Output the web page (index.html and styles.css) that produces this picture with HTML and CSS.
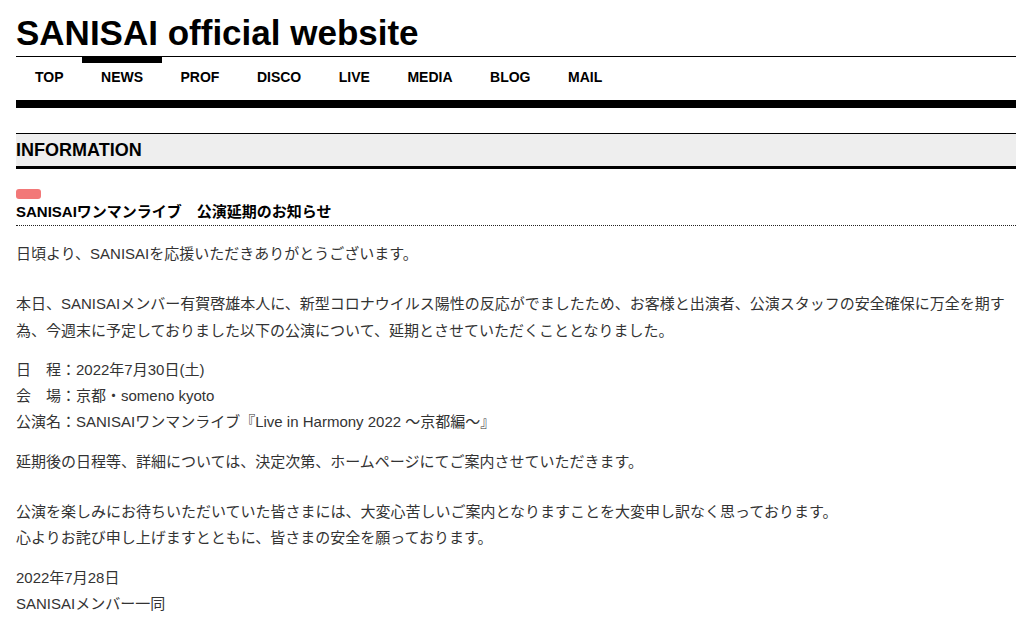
FILE: index.html
```html
<!DOCTYPE html>
<html lang="ja">
<head>
    <meta charset="UTF-8">
    <meta name="viewport" content="width=device-width, initial-scale=1.0">
    <title>SANISAI official website</title>
    <link rel="stylesheet" href="styles.css">
</head>
<body>
    <div class="wrap">
        <h1 class="site-title">SANISAI official website</h1>
        <nav class="gnav">
            <ul>
                <li><a href="#">TOP</a></li>
                <li class="active"><a href="#">NEWS</a></li>
                <li><a href="#">PROF</a></li>
                <li><a href="#">DISCO</a></li>
                <li><a href="#">LIVE</a></li>
                <li><a href="#">MEDIA</a></li>
                <li><a href="#">BLOG</a></li>
                <li><a href="#">MAIL</a></li>
            </ul>
        </nav>

        <h2 class="sec-title">INFORMATION</h2>

        <div class="entry">
            <span class="cat"></span>
            <h3 class="entry-title">SANISAIワンマンライブ　公演延期のお知らせ</h3>
            <div class="entry-body">
                <p class="gap">日頃より、SANISAIを応援いただきありがとうございます。</p>
                <p>本日、SANISAIメンバー有賀啓雄本人に、新型コロナウイルス陽性の反応がでましたため、お客様と出演者、公演スタッフの安全確保に万全を期す為、今週末に予定しておりました以下の公演について、延期とさせていただくこととなりました。</p>
                <p>日　程：2022年7月30日(土)<br>
                会　場：京都・someno kyoto<br>
                公演名：SANISAIワンマンライブ『Live in Harmony 2022 ～京都編～』</p>
                <p class="gap">延期後の日程等、詳細については、決定次第、ホームページにてご案内させていただきます。</p>
                <p>公演を楽しみにお待ちいただいていた皆さまには、大変心苦しいご案内となりますことを大変申し訳なく思っております。<br>
                心よりお詫び申し上げますとともに、皆さまの安全を願っております。</p>
                <p>2022年7月28日<br>
                SANISAIメンバー一同</p>
            </div>
        </div>
    </div>
</body>
</html>
```

FILE: styles.css
```css
body {
    margin: 0;
    background-color: #fff;
    color: #333;
    font-family: "Liberation Sans", "Noto Sans CJK JP", sans-serif;
}
.wrap {
    width: 1000px;
    margin-left: 16px;
    padding-top: 13px;
}
.site-title {
    margin: 0 0 3px;
    font-size: 35px;
    line-height: 40px;
    color: #000;
}

/* global nav */
.gnav {
    border-top: 1px solid #000;
    border-bottom: 8px solid #000;
}
.gnav ul {
    display: flex;
    margin: 0;
    padding: 0;
    list-style: none;
}
.gnav li {
    border-top: 6px solid transparent;
    padding: 4px 18.5px 13px 19px;
}
.gnav li.active {
    border-top-color: #000;
}
.gnav a {
    display: block;
    font-size: 14px;
    line-height: 20px;
    font-weight: bold;
    color: #000;
    text-decoration: none;
}

.sec-title {
    margin: 25px 0 0;
    background-color: #eee;
    border-top: 1px solid #000;
    border-bottom: 3px solid #000;
    font-size: 18px;
    line-height: 32px;
    color: #000;
}

/* entry */
.entry {
    padding-top: 20px;
}
.cat {
    display: block;
    width: 25px;
    height: 10px;
    border-radius: 3px;
    background-color: #f27878;
}
.entry-title {
    margin: 1px 0 0;
    padding-bottom: 1px;
    border-bottom: 1px dotted #222;
    font-size: 15px;
    line-height: 24px;
    color: #000;
}
.entry-body {
    padding-top: 15px;
    font-size: 15px;
    line-height: 26.3px;
}
.entry-body p {
    margin: 0 0 13px;
}
.entry-body p.gap {
    margin-bottom: 24px;
}
```
